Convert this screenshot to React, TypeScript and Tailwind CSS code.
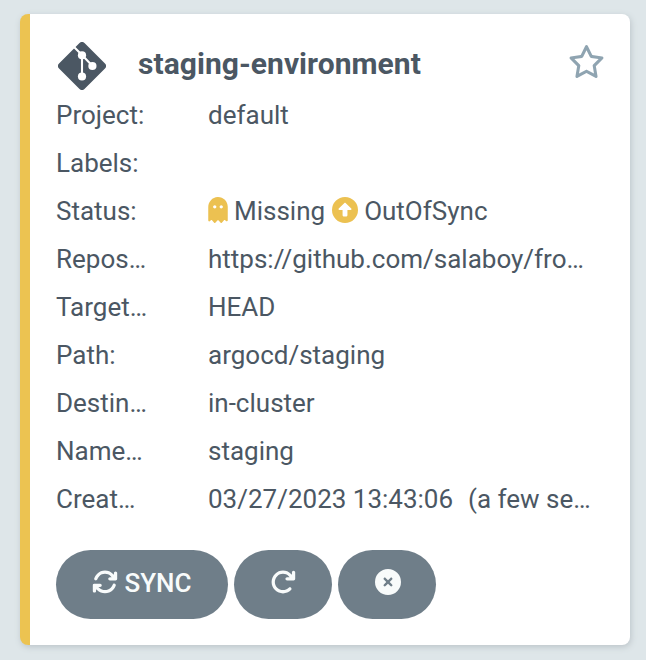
import { FaGhost } from 'react-icons/fa';
import { FaRegStar, FaCircleUp, FaCircleXmark, FaArrowsRotate, FaArrowRotateRight } from 'react-icons/fa6';
import type { ReactNode } from 'react';

const rows: [string, ReactNode][] = [
  ['Project:', 'default'],
  ['Labels:', ''],
  [
    'Status:',
    <>
      <FaGhost className="mr-[6px] h-[26px] w-5 -translate-y-px text-[#ecc151]" />Missing
      <FaCircleUp className="mr-[6.5px] ml-[6.5px] size-[26px] -translate-y-px text-[#ecc151]" />OutOfSync
    </>,
  ],
  ['Repos…', 'https://github.com/salaboy/fro…'],
  ['Target…', 'HEAD'],
  ['Path:', 'argocd/staging'],
  ['Destin…', 'in-cluster'],
  ['Name…', 'staging'],
  ['Creat…', <>03/27/2023 13:43:06<span className="ml-[15px]">(a few se…</span></>],
];

function GitLogo() {
  return (
    <svg viewBox="0 0 48 48" className="mt-[3px] ml-0.5 size-12 shrink-0">
      <rect x="6" y="6" width="36" height="36" rx="3.5" transform="rotate(45 24 24)" fill="currentColor" />
      <path d="M15.5 4.5l8.5 8.5v21.5M24 13l10.5 11" stroke="white" strokeWidth="2.1" fill="none" />
      <circle cx="24" cy="13.3" r="4.1" fill="white" />
      <circle cx="24" cy="34.5" r="4.1" fill="white" />
      <circle cx="34.4" cy="24" r="4.1" fill="white" />
    </svg>
  );
}

export default function App() {
  return (
    <div className="h-[660px] w-[646px] overflow-hidden bg-[#dee6e9] pt-[14px] pl-5 font-['Roboto',sans-serif] text-[26px] text-[#4b5763]">
      <div className="flex h-[631px] w-[610px] flex-col rounded-lg border-l-[10px] border-[#ecc351] bg-white pt-6 pl-[26px] shadow-[1px_2px_6px_#bcc4c9]">
        <div className="flex h-[53px] items-center">
          <GitLogo />
          <h1 className="-mt-[2px] ml-8 grow text-[30px] font-bold tracking-[0.04px]">staging-environment</h1>
          <FaRegStar className="-mt-[7px] mr-[25.5px] h-[33px] w-[37px] text-[#8fa4b1]" />
        </div>
        {rows.map(([label, value]) => (
          <div key={label} className="flex h-12 items-center whitespace-pre">
            <span className="w-[152px]">{label}</span>
            <span className="flex items-center">{value}</span>
          </div>
        ))}
        <div className="mt-[27px] flex gap-[6px] text-[#f8fbfb]">
          <button className="flex h-[69px] w-[172px] items-center justify-center gap-[6px] rounded-full bg-[#6f7e89] pb-[2px] font-medium">
            <FaArrowsRotate className="-mt-[3px]" />SYNC
          </button>
          <button className="flex h-[69px] w-[98px] items-center justify-center rounded-full bg-[#6f7e89] pb-[5px]">
            <FaArrowRotateRight />
          </button>
          <button className="flex h-[69px] w-[98px] items-center justify-center rounded-full bg-[#6f7e89] pb-[5px] pl-px">
            <FaCircleXmark />
          </button>
        </div>
      </div>
    </div>
  );
}
